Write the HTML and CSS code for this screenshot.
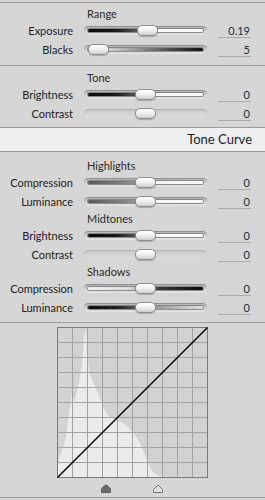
FILE: index.html
```html
<!DOCTYPE html>
<html>
<head>
<meta charset="utf-8">
<link rel="stylesheet" href="styles.css">
</head>
<body>
<div class="panel">
  <div class="section s1">
    <div class="title">Range</div>
    <div class="row">
      <span class="label">Exposure</span>
      <div class="track"><div class="line g-dark-left"></div><div class="thumb" style="left:53px"></div></div>
      <span class="value">0.19</span>
    </div>
    <div class="row">
      <span class="label">Blacks</span>
      <div class="track"><div class="line g-blacks"></div><div class="thumb" style="left:4px"></div></div>
      <span class="value">5</span>
    </div>
  </div>
  <div class="section s2">
    <div class="title">Tone</div>
    <div class="row">
      <span class="label">Brightness</span>
      <div class="track"><div class="line g-dark-left"></div><div class="thumb" style="left:51px"></div></div>
      <span class="value">0</span>
    </div>
    <div class="row">
      <span class="label">Contrast</span>
      <div class="track flat"><div class="thumb" style="left:51px"></div></div>
      <span class="value">0</span>
    </div>
  </div>
  <div class="header">Tone Curve</div>
  <div class="section s3">
    <div class="title sub">Highlights</div>
    <div class="row">
      <span class="label">Compression</span>
      <div class="track"><div class="line g-gray-left"></div><div class="thumb" style="left:51px"></div></div>
      <span class="value">0</span>
    </div>
    <div class="row">
      <span class="label">Luminance</span>
      <div class="track"><div class="line g-gray-left"></div><div class="thumb" style="left:51px"></div></div>
      <span class="value">0</span>
    </div>
    <div class="title sub">Midtones</div>
    <div class="row">
      <span class="label">Brightness</span>
      <div class="track"><div class="line g-dark-left"></div><div class="thumb" style="left:51px"></div></div>
      <span class="value">0</span>
    </div>
    <div class="row">
      <span class="label">Contrast</span>
      <div class="track flat"><div class="thumb" style="left:51px"></div></div>
      <span class="value">0</span>
    </div>
    <div class="title sub">Shadows</div>
    <div class="row">
      <span class="label">Compression</span>
      <div class="track"><div class="line g-light-left"></div><div class="thumb" style="left:51px"></div></div>
      <span class="value">0</span>
    </div>
    <div class="row">
      <span class="label">Luminance</span>
      <div class="track"><div class="line g-dark-gray"></div><div class="thumb" style="left:51px"></div></div>
      <span class="value">0</span>
    </div>
  </div>
  <div class="section s4">
    <svg class="curve" width="151" height="151" viewBox="0 0 151 151">
      <rect x="0.5" y="0.5" width="150" height="150" fill="#d2d2d2"/>
      <path d="M0.5,150.5 L0.5,140 L3,128 L6,121 L9,110 L12,86 L15,66 L17,74 L19,68 L22,56 L25,38 L27,10 L29,2 L30,12 L31,36 L33,48 L36,54 L40,64 L44,75 L48,84 L53,90 L60,94 L66,96 L72,101 L78,108 L84,118 L88,128 L92,138 L96,145 L102,149 L110,150.5 Z" fill="#ececec"/>
      <g stroke="#a2a2a2" stroke-width="1">
        <path d="M15.5,0.5V150.5M30.5,0.5V150.5M45.5,0.5V150.5M60.5,0.5V150.5M75.5,0.5V150.5M90.5,0.5V150.5M105.5,0.5V150.5M120.5,0.5V150.5M135.5,0.5V150.5"/>
        <path d="M0.5,15.5H150.5M0.5,30.5H150.5M0.5,45.5H150.5M0.5,60.5H150.5M0.5,75.5H150.5M0.5,90.5H150.5M0.5,105.5H150.5M0.5,120.5H150.5M0.5,135.5H150.5"/>
      </g>
      <rect x="0.5" y="0.5" width="150" height="150" fill="none" stroke="#7a7a7a"/>
      <path d="M0.5,150.5 L150.5,0.5" stroke="#000" stroke-width="1.4"/>
    </svg>
    <svg class="markers" width="151" height="9" viewBox="0 0 151 9">
      <path d="M44.5,8.5 L44.5,5.5 Q44.5,4.5 45.5,3.6 L49,0.8 L52.5,3.6 Q53.5,4.5 53.5,5.5 L53.5,8.5 Z" fill="#6a6a6a" stroke="#5a5a5a" stroke-linejoin="round"/>
      <path d="M96.5,8.5 L96.5,5.5 L101,1 L105.5,5.5 L105.5,8.5 Z" fill="#e2e2e2" stroke="#707070" stroke-linejoin="round"/>
    </svg>
  </div>
</div>
</body>
</html>
```

FILE: styles.css
```css
html, body {
  margin: 0;
  padding: 0;
}
body {
  width: 265px;
  height: 500px;
  background: #d6d6d6;
  font-family: Lato, "Liberation Sans", sans-serif;
  font-size: 11px;
  color: #222;
  overflow: hidden;
}
.panel {
  margin-top: 2px;
  border-top: 1px solid #9c9c9c;
}
.section {
  border-bottom: 1px solid #9c9c9c;
}
.s1 { padding: 4px 0 6px; }
.s2 { padding: 5px 0 4px; }
.s3 { padding: 6px 0 5px; }
.s4 {
  padding: 4px 0 4px;
  display: flex;
  flex-direction: column;
  align-items: center;
  gap: 6px;
}
.title {
  height: 14px;
  line-height: 14px;
  padding-left: 87px;
  color: #2a2a2a;
}
.title.sub {
  height: 15px;
  line-height: 15px;
}
.row {
  display: grid;
  grid-template-columns: 73px 123px 33px;
  column-gap: 11px;
  height: 19px;
  align-items: center;
}
.label {
  text-align: right;
  white-space: nowrap;
  color: #222;
}
.track {
  position: relative;
  height: 9px;
  border-radius: 5px;
  background: linear-gradient(#b4b4b4, #d2d2d2 50%, #e4e4e4);
  box-shadow: inset 0 1px 1px rgba(0,0,0,0.25);
}
.track.flat {
  background: linear-gradient(#c6c6c6, #d4d4d4 50%, #dcdcdc);
  box-shadow: inset 0 1px 1px rgba(0,0,0,0.12);
}
.line {
  position: absolute;
  left: 4px;
  right: 4px;
  top: 3px;
  height: 3px;
  border-radius: 2px;
  box-shadow: 0 0 0 1px rgba(90,90,90,0.6);
}
.g-dark-left {
  background: linear-gradient(to right, #0a0a0a 0%, #1a1a1a 25%, #555 42%, #9a9a9a 50%, #fafafa 58%, #fafafa 100%);
}
.g-blacks {
  background: linear-gradient(to right, #f6f6f6 0%, #d8d8d8 15%, #a0a0a0 40%, #505050 70%, #101010 100%);
}
.g-gray-left {
  background: linear-gradient(to right, #5a5a5a 0%, #7a7a7a 25%, #9a9a9a 45%, #f4f4f4 58%, #fafafa 100%);
}
.g-light-left {
  background: linear-gradient(to right, #f2f2f2 0%, #dcdcdc 35%, #9a9a9a 50%, #3a3a3a 62%, #0a0a0a 100%);
}
.g-dark-gray {
  background: linear-gradient(to right, #0a0a0a 0%, #2a2a2a 30%, #777 48%, #9a9a9a 60%, #c8c8c8 85%, #dedede 100%);
}
.thumb {
  position: absolute;
  top: -1px;
  width: 19px;
  height: 9px;
  border-radius: 5px;
  border: 1px solid #8c8c8c;
  background: linear-gradient(#ffffff, #f2f2f2 45%, #cfcfcf);
  box-shadow: 0 1px 1px rgba(0,0,0,0.2);
}
.value {
  height: 13px;
  line-height: 13px;
  text-align: right;
  padding-right: 1px;
  border-bottom: 1px solid #ababab;
  color: #2a2a2a;
}
.header {
  height: 23px;
  line-height: 23px;
  background: #efefef;
  border-bottom: 1px solid #9c9c9c;
  text-align: right;
  padding-right: 13px;
  font-size: 13px;
  color: #222;
}
.curve, .markers {
  display: block;
}
```
